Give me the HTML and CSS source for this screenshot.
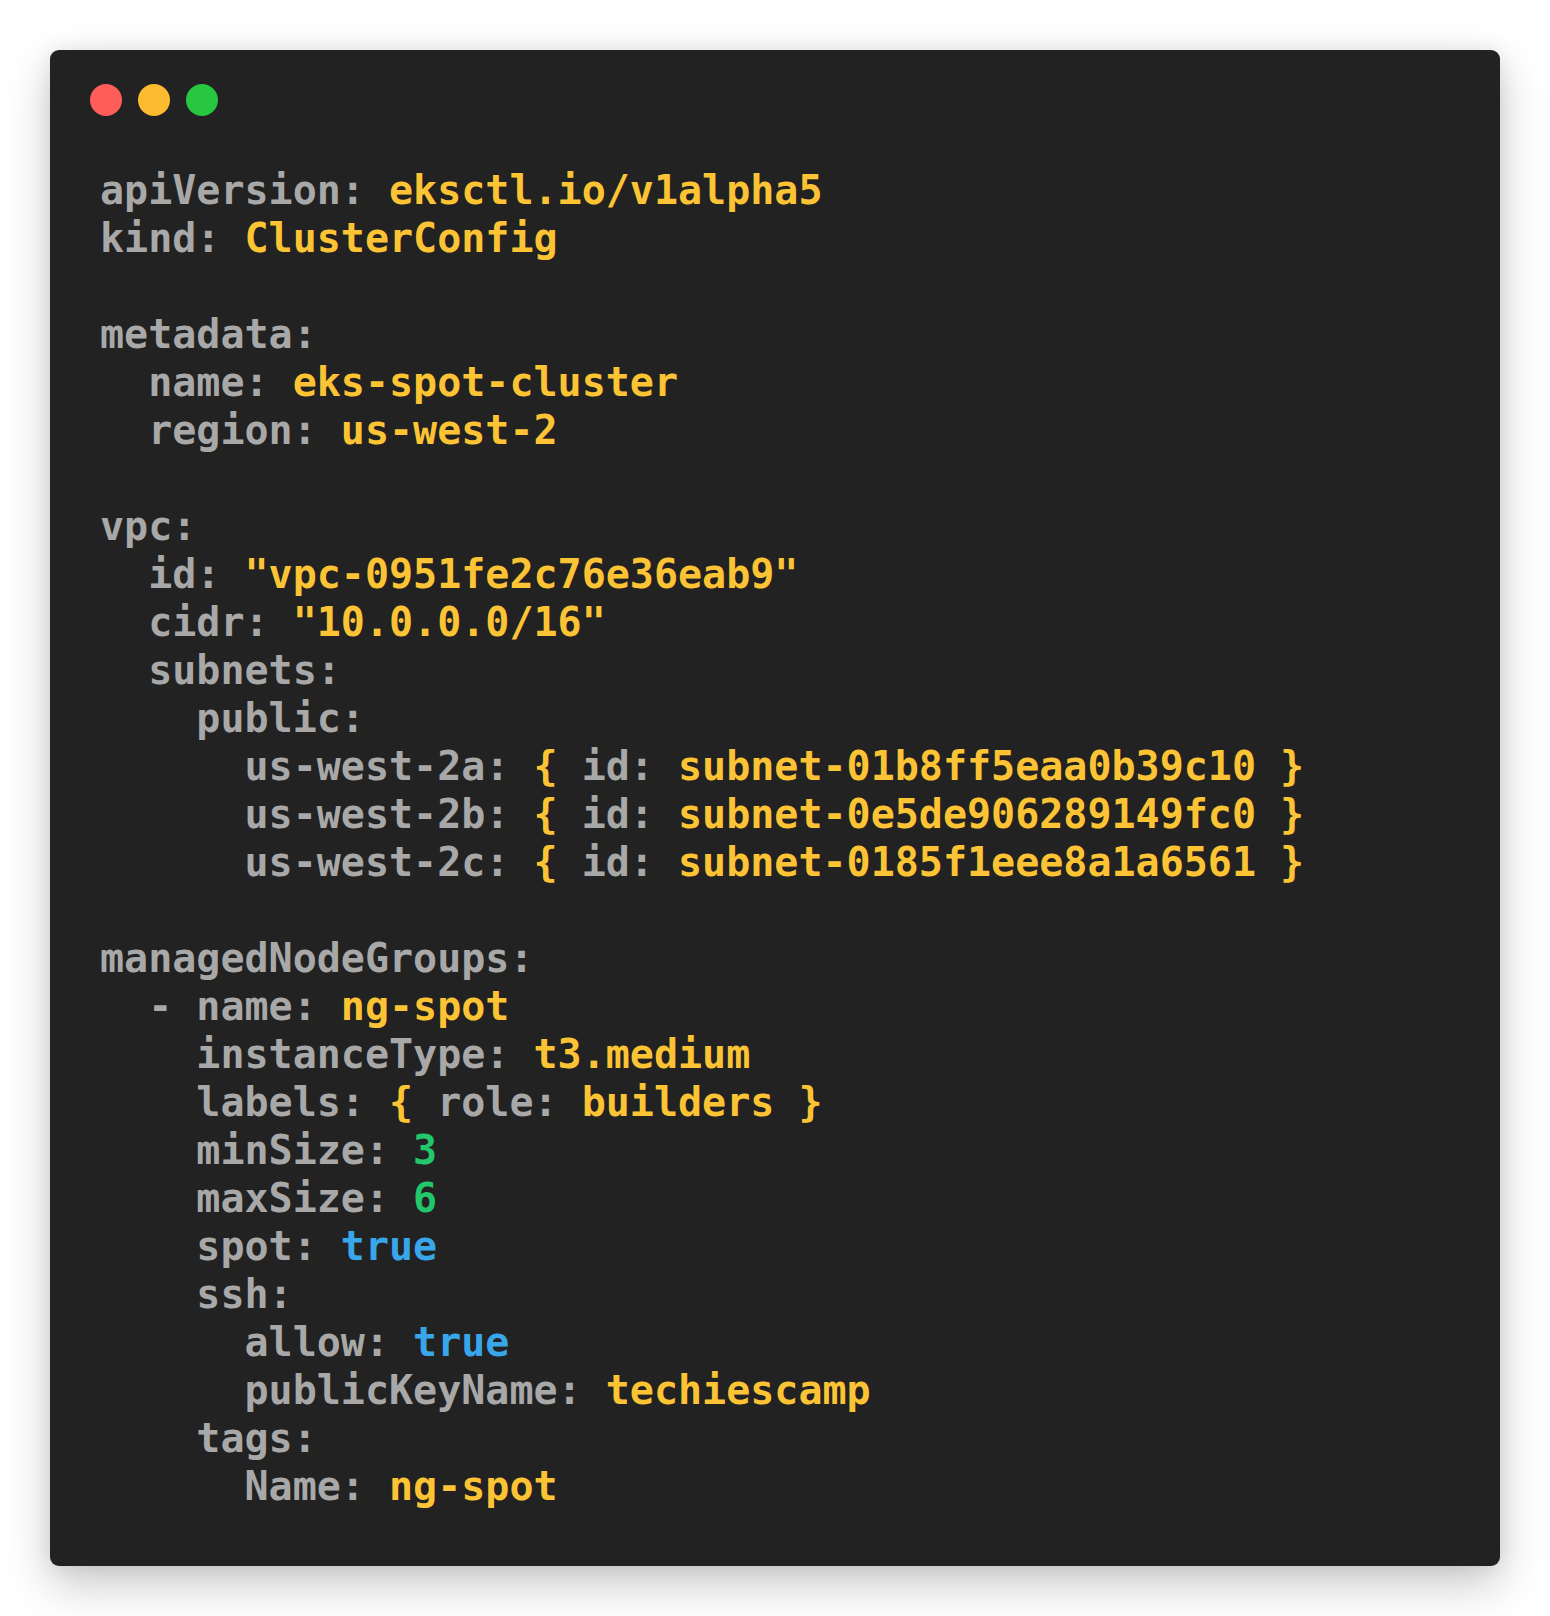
FILE: index.html
```html
<!DOCTYPE html>
<html>
<head>
<meta charset="utf-8">
<link rel="stylesheet" href="styles.css">
</head>
<body>
<div class="card">
  <div class="dots">
    <span class="dot red"></span>
    <span class="dot yellow"></span>
    <span class="dot green"></span>
  </div>
<pre class="code"><span class="k">apiVersion:</span> <span class="s">eksctl.io/v1alpha5</span>
<span class="k">kind:</span> <span class="s">ClusterConfig</span>

<span class="k">metadata:</span>
<span class="k">  name:</span> <span class="s">eks-spot-cluster</span>
<span class="k">  region:</span> <span class="s">us-west-2</span>

<span class="k">vpc:</span>
<span class="k">  id:</span> <span class="s">"vpc-0951fe2c76e36eab9"</span>
<span class="k">  cidr:</span> <span class="s">"10.0.0.0/16"</span>
<span class="k">  subnets:</span>
<span class="k">    public:</span>
<span class="k">      us-west-2a:</span> <span class="s">{</span> <span class="k">id:</span> <span class="s">subnet-01b8ff5eaa0b39c10 }</span>
<span class="k">      us-west-2b:</span> <span class="s">{</span> <span class="k">id:</span> <span class="s">subnet-0e5de906289149fc0 }</span>
<span class="k">      us-west-2c:</span> <span class="s">{</span> <span class="k">id:</span> <span class="s">subnet-0185f1eee8a1a6561 }</span>

<span class="k">managedNodeGroups:</span>
<span class="k">  - name:</span> <span class="s">ng-spot</span>
<span class="k">    instanceType:</span> <span class="s">t3.medium</span>
<span class="k">    labels:</span> <span class="s">{</span> <span class="k">role:</span> <span class="s">builders }</span>
<span class="k">    minSize:</span> <span class="n">3</span>
<span class="k">    maxSize:</span> <span class="n">6</span>
<span class="k">    spot:</span> <span class="b">true</span>
<span class="k">    ssh:</span>
<span class="k">      allow:</span> <span class="b">true</span>
<span class="k">      publicKeyName:</span> <span class="s">techiescamp</span>
<span class="k">    tags:</span>
<span class="k">      Name:</span> <span class="s">ng-spot</span></pre>
</div>
</body>
</html>
```

FILE: styles.css
```css
html, body {
  margin: 0;
  padding: 0;
  background: #ffffff;
}

body {
  padding: 50px 50px 50px 50px;
}

.card {
  width: 1450px;
  height: 1516px;
  box-sizing: border-box;
  background: #222222;
  border-radius: 9px;
  box-shadow: 0 18px 45px rgba(0, 0, 0, 0.22), 0 0 20px rgba(0, 0, 0, 0.08);
  padding: 34px 40px 0 40px;
}

.dots {
  display: flex;
  gap: 16px;
  height: 32px;
}

.dot {
  width: 32px;
  height: 32px;
  border-radius: 50%;
  display: block;
}

.red { background: #fe5d5a; }
.yellow { background: #fdbb2f; }
.green { background: #27c840; }

.code {
  margin: 50px 0 0 10px;
  font-family: "DejaVu Sans Mono", "Liberation Mono", monospace;
  font-weight: bold;
  font-size: 40px;
  line-height: 48px;
  color: #a8a8a8;
  white-space: pre;
}

.k { color: #a8a8a8; }
.s { color: #fcc435; }
.n { color: #22c66b; }
.b { color: #39a6ea; }
```
